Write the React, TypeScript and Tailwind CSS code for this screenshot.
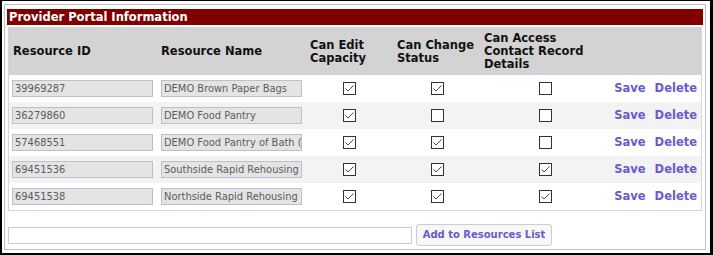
import React from "react";

type Row = { id: string; name: string; edit: boolean; status: boolean; access: boolean };

const rows: Row[] = [
  { id: "39969287", name: "DEMO Brown Paper Bags", edit: true, status: true, access: false },
  { id: "36279860", name: "DEMO Food Pantry", edit: true, status: false, access: false },
  { id: "57468551", name: "DEMO Food Pantry of Bath (Maine)", edit: true, status: true, access: false },
  { id: "69451536", name: "Southside Rapid Rehousing", edit: true, status: true, access: true },
  { id: "69451538", name: "Northside Rapid Rehousing", edit: true, status: true, access: true },
];

function Box({ checked }: { checked: boolean }) {
  return (
    <div className="w-[13px] h-[13px] border border-[#333333] bg-white flex items-center justify-center">
      {checked && (
        <svg width="11" height="11" viewBox="0 0 11 11" className="block">
          <path d="M1.5 5.5 L4 8 L9.5 2.5" fill="none" stroke="#4a4a4a" strokeWidth="1" />
        </svg>
      )}
    </div>
  );
}

function Field({ value }: { value: string }) {
  return (
    <div className="w-[141px] h-[17px] border border-[#bcbfcc] bg-[#e4e4e4] text-[#5c5c5c] font-['DejaVu_Sans_Condensed',sans-serif] text-[11px] leading-[15px] pl-[2px] overflow-hidden whitespace-nowrap">
      {value}
    </div>
  );
}

export default function App() {
  return (
    <div className="w-[713px] h-[255px] bg-white border-black border-l-2 border-t border-r-[3px] border-b-2 pl-[2px] pt-[3px] pr-[4px] pb-[3px] font-['DejaVu_Sans',sans-serif]">
      <div className="h-full border border-[#c0c0c0] px-[2px] pt-[4px] flex flex-col">
        <div className="h-[16px] bg-[#800000] text-white font-bold text-[11.5px] leading-[16px] pl-[2px]">
          Provider Portal Information
        </div>
        <div className="mt-[2px] mx-px border border-[#d6d6d6]">
          <div className="grid grid-cols-[149px_148px_87px_88px_129px_1fr] h-[47px] bg-[#d3d3d3] font-bold text-[11.5px] leading-[13px] text-[#111111] items-center">
            <div className="pl-[4px]">Resource ID</div>
            <div className="pl-[3px]">Resource Name</div>
            <div className="pl-[4px]">Can Edit<br />Capacity</div>
            <div className="pl-[4px]">Can Change<br />Status</div>
            <div className="pl-[3px]">Can Access<br />Contact Record<br />Details</div>
            <div />
          </div>
          {rows.map((r, i) => (
            <div
              key={r.id}
              className={
                "grid grid-cols-[149px_148px_87px_88px_129px_1fr] h-[27px] items-center " +
                (i % 2 === 1 ? "bg-[#f3f3f3]" : "bg-white")
              }
            >
              <div className="pl-[3px]">
                <Field value={r.id} />
              </div>
              <div className="pl-[3px]">
                <Field value={r.name} />
              </div>
              <div className="flex justify-center">
                <Box checked={r.edit} />
              </div>
              <div className="flex justify-center">
                <Box checked={r.status} />
              </div>
              <div className="flex justify-center">
                <Box checked={r.access} />
              </div>
              <div className="flex justify-end gap-[9px] pr-[4px] font-bold text-[11.5px] text-[#6a5acd]">
                <span>Save</span>
                <span>Delete</span>
              </div>
            </div>
          ))}
        </div>
        <div className="mt-[13px] flex items-center gap-[4px] pl-px">
          <div className="w-[404px] h-[17px] border border-[#c8cad8] bg-white" />
          <div className="w-[136px] h-[22px] border border-[#cccccc] rounded-[3px] bg-[#f7f7f7] text-[#6a5acd] font-bold text-[10px] leading-[20px] whitespace-nowrap flex items-center justify-center">
            Add to Resources List
          </div>
        </div>
      </div>
    </div>
  );
}
